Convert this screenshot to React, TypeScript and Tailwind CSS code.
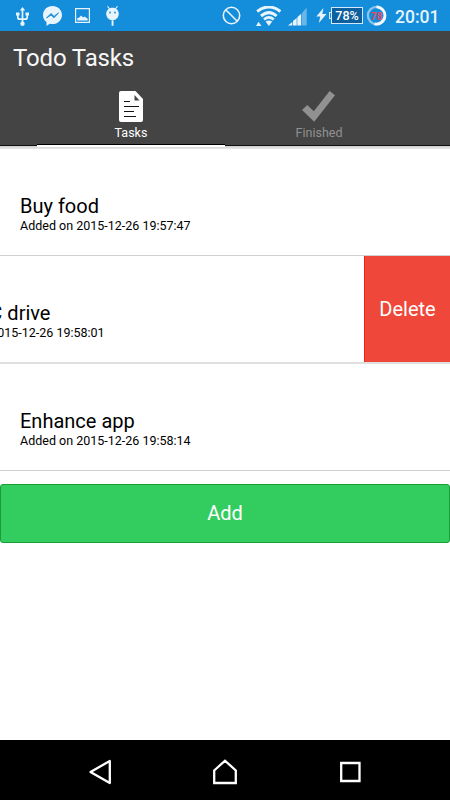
import type { ReactNode } from "react";
import clsx from "clsx";

type Task = { id: number; title: string; added: string; swiped?: boolean };

const tasks: Task[] = [
  { id: 1, title: "Buy food", added: "2015-12-26 19:57:47" },
  { id: 2, title: "Clean C drive", added: "2015-12-26 19:58:01", swiped: true },
  { id: 3, title: "Enhance app", added: "2015-12-26 19:58:14" },
];

function StatusBar() {
  return (
    <div className="flex h-[31px] shrink-0 items-start bg-[#148dda] text-[#e8f4fc]">
      {/* usb */}
      <svg className="mt-[7px] ml-4 h-[19px] w-[13px]" viewBox="0 0 13 19" fill="none" stroke="currentColor" strokeWidth="1.7">
        <path d="M6.5 2v15M1.8 7v3.2q0 2 2 2h5.4q2 0 2-2V6" />
        <path d="M3.8 3.6 6.5 0l2.7 3.6zM0 5.5h3.5v3H0zM9.5 5.5H13v3H9.5z" fill="currentColor" stroke="none" />
        <circle cx="6.5" cy="16.7" r="2.2" fill="currentColor" stroke="none" />
      </svg>
      {/* messenger */}
      <svg className="mt-[6px] ml-[14px] h-5 w-[19px]" viewBox="0 0 19 20">
        <path d="M9.5 0C4.2 0 0 3.9 0 9c0 3 1.3 5.5 3.5 7.1V20l3.3-2.2c.9.2 1.8.3 2.7.3 5.3 0 9.5-4 9.5-9.1S14.8 0 9.5 0z" fill="currentColor" />
        <path d="m3.5 12 4.500-4.500 3 2.900 4.500-3.600-4.500 5-3-2.800z" fill="#148dda" stroke="#148dda" strokeWidth=".9" />
      </svg>
      {/* picture */}
      <svg className="mt-[8px] ml-[13px] h-[15px] w-[15px]" viewBox="0 0 15 15">
        <path d="M.6.6h13.8v13.8H.6z" fill="none" stroke="currentColor" strokeWidth="1.2" />
        <path d="M2.3 12.6V10l1.7-.2L6 7.5l2.2 2 1.3-1 3.2 2.2v1.9z" fill="currentColor" />
      </svg>
      {/* android */}
      <svg className="mt-[6px] ml-4 h-5 w-[13px]" viewBox="0 0 13 20">
        <path d="M1.5.3 3.7 3M11.5.3 9.3 3" stroke="currentColor" strokeWidth="1.1" />
        <path d="M6.5 1.7C3 1.7.2 4.2.2 7.800S3 14.300 6.500 14.300s6.300-2.900 6.300-6.500S10 1.700 6.500 1.700zM5.600 14h1.900v5.700H5.600z" fill="currentColor" />
        <circle cx="4" cy="6.5" r=".9" fill="#148dda" />
        <circle cx="9" cy="6.5" r=".9" fill="#148dda" />
      </svg>

      {/* blocked */}
      <svg className="mt-[6px] ml-auto h-[19px] w-[19px]" viewBox="0 0 19 19" fill="none" stroke="currentColor" strokeWidth="1.6">
        <circle cx="9.5" cy="9.5" r="8.2" />
        <path d="m3.7 3.7 11.6 11.6" />
      </svg>
      {/* wifi */}
      <svg className="mt-[6px] ml-[15px] h-5 w-[25px]" viewBox="0 0 25 20" fill="none" stroke="currentColor">
        <path d="M1.2 5.5Q13 -3.5 24.4 5.5" strokeWidth="3" />
        <path d="M5 10Q13 3.2 20.6 10" strokeWidth="3" />
        <path d="M8 13.5Q13 9.3 17.7 13.5" strokeWidth="2.7" />
        <path d="M9.6 15.6Q13 13.5 16.2 15.6L12.9 19.9z" fill="currentColor" stroke="none" />
        <path d="M2.5 15.8 5.5 20H0z" fill="currentColor" stroke="none" />
      </svg>
      {/* signal */}
      <svg className="mt-[7px] ml-[7px] h-[19px] w-[19px]" viewBox="0 0 19 19" fill="currentColor">
        <path d="M0 18.5 4.3 15v3.5zM5 14l3.700-3v7.500H5zM9.300 10.200l3.900-3.500v11.800H9.300z" />
        <path d="M14 6 18.7.5v18H14z" opacity=".4" />
      </svg>
      {/* charging bolt + battery */}
      <svg className="mt-[8px] ml-[9px] h-[15px] w-[11px]" viewBox="0 0 11 15" fill="currentColor">
        <path d="M7.5 0 .3 8.5h4L2.8 15 10.5 6H6.3z" />
      </svg>
      <div className="mt-[12px] ml-[2px] h-[7px] w-[2px] border border-r-0 border-[#d4eafa]" />
      <div className="mt-[7px] flex h-[17px] w-[32px] items-center justify-center border border-[#d4eafa] bg-[#0d5f9e] pt-px text-[12.5px] leading-none font-medium text-white">
        78%
      </div>
      <svg className="mt-[5px] ml-[3px] h-[21px] w-[21px]" viewBox="0 0 21 21">
        <circle cx="10.5" cy="10.5" r="8.6" fill="none" stroke="#8ac4ec" strokeWidth="2.3" />
        <path d="M10.5 1.9a8.6 8.6 0 1 1-2 17" fill="none" stroke="#f4f9fd" strokeWidth="2.8" />
        <text x="10.5" y="14.5" textAnchor="middle" fill="#e94a5f" fontSize="10" fontWeight="700" fontFamily="Roboto, sans-serif">78</text>
      </svg>
      <span className="mt-[6px] mr-[11px] ml-[8px] w-[44px] text-[17.5px] leading-[22px] font-medium whitespace-nowrap">20:01</span>
    </div>
  );
}

function Tab({ label, active, children }: { label: string; active?: boolean; children: ReactNode }) {
  return (
    <div
      className={clsx(
        "flex h-[62px] w-[188px] flex-col items-center border-b-2 pt-[4px]",
        active ? "border-white text-white shadow-[inset_0_-1px_0_#000]" : "border-transparent text-[#919191]"
      )}
    >
      <div className="flex h-[34px] items-center">{children}</div>
      <span className="mt-[2px] text-[12.5px] leading-4">{label}</span>
    </div>
  );
}

function Header() {
  return (
    <header className="relative z-10 flex h-[115px] shrink-0 flex-col bg-[#444444] shadow-[inset_0_-1px_0_#111]">
      <h1 className="mt-3 ml-[13px] text-[24px] leading-[30px] tracking-[-0.15px] text-[#f7f7f7]">Todo Tasks</h1>
      <div className="mt-[12px] ml-[37px] flex">
        <Tab label="Tasks" active>
          <svg className="h-[31px] w-6" viewBox="0 0 24 31">
            <path d="M2 0h14.5L24 8v21q0 2-2 2H2q-2 0-2-2V2Q0 0 2 0z" fill="currentColor" />
            <path d="M15.5 4v5.5h5z" fill="#444444" />
            <path d="M5 10.5h6M5 15.5h15M5 20.5h10M5 25.5h12" stroke="#151515" strokeWidth="1.2" />
          </svg>
        </Tab>
        <Tab label="Finished">
          <svg className="mr-px h-[31px] w-[33px]" viewBox="0 0 33 31">
            <path d="m0 19 5.2-5 6.6 6.3L27.6 0 33 4.2 12.2 30.7z" fill="currentColor" />
          </svg>
        </Tab>
      </div>
    </header>
  );
}

function TaskRow({ task }: { task: Task }) {
  return (
    <li
      className={clsx(
        "flex overflow-hidden",
        task.swiped ? "h-[108px] border-b-2 border-[#e0e0e0]" : "h-[107px] border-b border-[#d0d0d0]"
      )}
    >
      <div className={clsx("w-[450px] shrink-0 pt-[45px] pl-5 text-black", task.swiped && "-ml-[86px]")}>
        <div className="text-[20px] leading-6">{task.title}</div>
        <div className="text-[12.5px] leading-4">Added on {task.added}</div>
      </div>
      {task.swiped && (
        <button className="w-[86px] shrink-0 border-l border-[#f01e14] bg-[#ef473a] text-[20px] text-white">
          Delete
        </button>
      )}
    </li>
  );
}

function NavBar() {
  return (
    <nav className="mt-auto flex h-[60px] items-center justify-between bg-black px-[88px] pt-[3px] text-white">
      <svg className="h-[26px] w-6" viewBox="0 0 24 26" fill="none" stroke="currentColor" strokeWidth="2.3" strokeLinejoin="round">
        <path d="M2.5 13 21.8 2v22z" />
      </svg>
      <svg className="h-[26px] w-[26px]" viewBox="0 0 26 26" fill="none" stroke="currentColor" strokeWidth="2.3">
        <path d="M2.2 11.5 13 1.7l10.8 9.8V24H2.2z" />
      </svg>
      <svg className="h-[26px] w-6" viewBox="0 0 24 26" fill="none" stroke="currentColor" strokeWidth="2.3">
        <path d="M3.2 4h18.3v18H3.2z" />
      </svg>
    </nav>
  );
}

export default function App() {
  return (
    <div className="flex h-[800px] w-[450px] flex-col overflow-hidden bg-white font-['Roboto',sans-serif]">
      <StatusBar />
      <Header />
      <div className="h-[3px] shrink-0 bg-linear-to-b from-[#cccccc] to-[#ececec]" />
      <ul>
        {tasks.map((task) => (
          <TaskRow key={task.id} task={task} />
        ))}
      </ul>
      <button className="mt-[13px] h-[59px] w-full rounded-[3px] border border-[#189d37] bg-[#33cd5f] pb-[2px] text-[20px] text-white">
        Add
      </button>
      <NavBar />
    </div>
  );
}
